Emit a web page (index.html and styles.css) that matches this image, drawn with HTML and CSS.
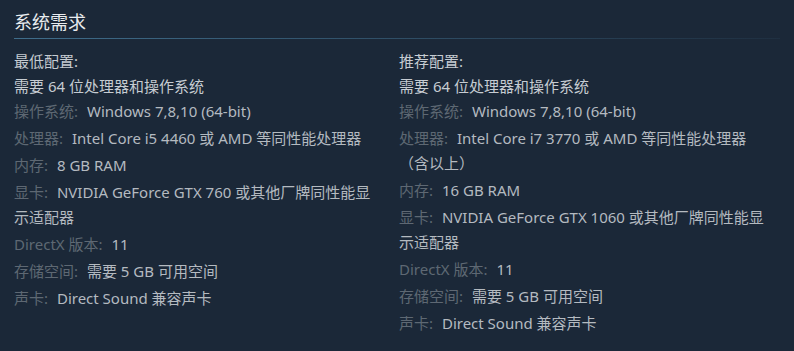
FILE: index.html
```html
<!DOCTYPE html>
<html lang="zh-CN">
<head>
<meta charset="utf-8">
<link rel="stylesheet" href="styles.css">
</head>
<body>
<div class="sysreq">
  <h2 class="title">系统需求</h2>
  <div class="cols">
    <div class="col">
      <div class="head">最低配置:</div>
      <div class="note">需要 64 位处理器和操作系统</div>
      <ul class="list">
        <li><span class="lbl">操作系统:</span> Windows 7,8,10 (64-bit)</li>
        <li><span class="lbl">处理器:</span> Intel Core i5 4460 或 AMD 等同性能处理器</li>
        <li><span class="lbl">内存:</span> 8 GB RAM</li>
        <li><span class="lbl">显卡:</span> NVIDIA GeForce GTX 760 或其他厂牌同性能显示适配器</li>
        <li><span class="lbl">DirectX 版本:</span> 11</li>
        <li><span class="lbl">存储空间:</span> 需要 5 GB 可用空间</li>
        <li><span class="lbl">声卡:</span> Direct Sound 兼容声卡</li>
      </ul>
    </div>
    <div class="col">
      <div class="head">推荐配置:</div>
      <div class="note">需要 64 位处理器和操作系统</div>
      <ul class="list">
        <li><span class="lbl">操作系统:</span> Windows 7,8,10 (64-bit)</li>
        <li><span class="lbl">处理器:</span> Intel Core i7 3770 或 AMD 等同性能处理器<span class="keep">（含以上）</span></li>
        <li><span class="lbl">内存:</span> 16 GB RAM</li>
        <li><span class="lbl">显卡:</span> NVIDIA GeForce GTX 1060 或其他厂牌同性能显示适配器</li>
        <li><span class="lbl">DirectX 版本:</span> 11</li>
        <li><span class="lbl">存储空间:</span> 需要 5 GB 可用空间</li>
        <li><span class="lbl">声卡:</span> Direct Sound 兼容声卡</li>
      </ul>
    </div>
  </div>
</div>
</body>
</html>
```

FILE: styles.css
```css
html, body {
  margin: 0;
  padding: 0;
  background: #1b2838;
  height: 100%;
}

body {
  font-family: "Noto Sans", "Noto Sans CJK SC", sans-serif;
  font-size: 15px;
  color: #acb2b8;
}

.sysreq {
  padding: 0 14px;
}

.title {
  margin: 0;
  padding-top: 8px;
  height: 30px;
  line-height: 28px;
  font-size: 18px;
  font-weight: normal;
  color: #e9ecef;
  position: relative;
}

.title::after {
  content: "";
  position: absolute;
  left: 0;
  right: 0;
  bottom: -1px;
  height: 1px;
  background: linear-gradient(to right, #3f6d8b 0%, #35597327 100%);
}

.cols {
  display: flex;
  gap: 14px;
  padding-top: 11px;
}

.col {
  width: 371px;
}

.head,
.note {
  line-height: 25px;
  color: #c6ccd2;
}

.list {
  list-style: none;
  margin: 0;
  padding: 0;
}

.list li {
  line-height: 25px;
  margin-bottom: 2px;
  color: #b4bac0;
}

.lbl {
  color: #5e6873;
  margin-right: 5px;
}

.keep {
  white-space: nowrap;
}
```
